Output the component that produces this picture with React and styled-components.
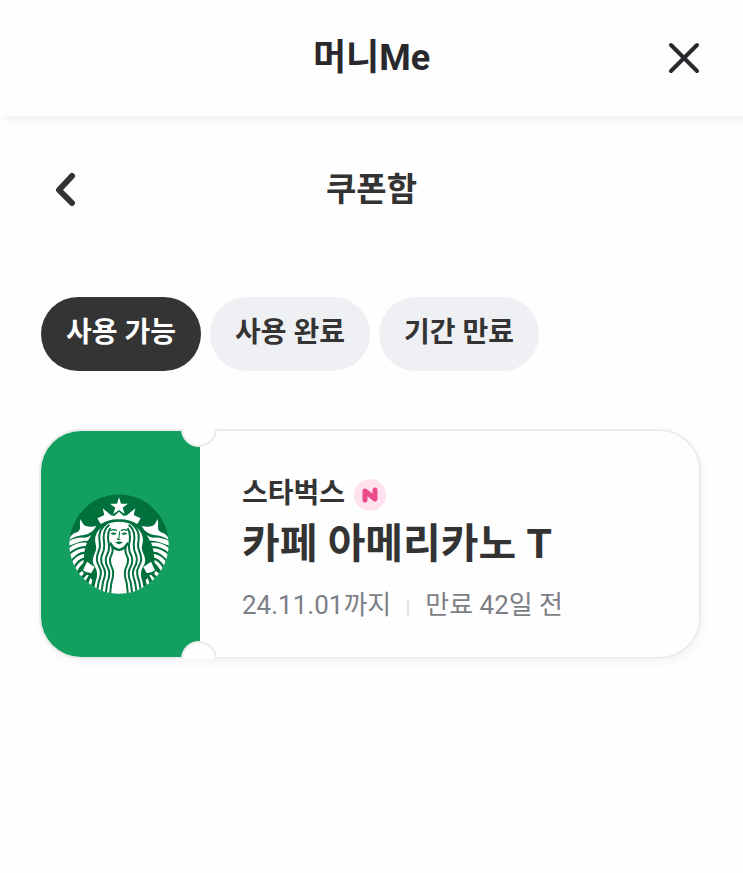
import React, { useState } from "react";
import styled, { createGlobalStyle } from "styled-components";

const GlobalStyle = createGlobalStyle`
  * { box-sizing: border-box; }
  body {
    margin: 0;
    background: #fefefe;
    color: #333333;
    font-family: Roboto, "Noto Sans CJK KR", sans-serif;
  }
  h1, h2, h3, p { margin: 0; }
  button { font: inherit; color: inherit; border: 0; padding: 0; background: none; cursor: pointer; }
`;

const TopBar = styled.header`
  display: grid;
  grid-template-columns: 48px 1fr 48px;
  align-items: center;
  height: 116px;
  padding: 0 35px;
  background: #fefefe;
  box-shadow: 6px 6px 8px rgba(0, 0, 0, 0.05);
`;

const AppTitle = styled.h1`
  grid-column: 2;
  text-align: center;
  font-size: 36px;
  line-height: 52px;
  font-weight: 700;
  color: #29292d;
`;

const IconButton = styled.button`
  display: flex;
  align-items: center;
  justify-content: center;
  width: 48px;
  height: 48px;
`;

const SubBar = styled.div`
  display: grid;
  grid-template-columns: 48px 1fr 48px;
  align-items: center;
  padding: 50px 42px 0;
`;

const PageTitle = styled.h2`
  text-align: center;
  font-size: 33px;
  line-height: 48px;
  font-weight: 700;
`;

const Tabs = styled.nav`
  display: flex;
  flex-wrap: wrap;
  gap: 9px;
  padding: 83px 41px 0;
`;

const Tab = styled.button`
  height: 74px;
  padding: 0 25px 2px;
  border-radius: 37px;
  font-size: 28px;
  line-height: 40px;
  font-weight: 700;
  background: ${(p) => (p.$active ? "#343434" : "#eff0f4")};
  color: ${(p) => (p.$active ? "#ffffff" : "#343434")};
`;

const CouponList = styled.main`
  padding: 58px 42px 40px 39px;
`;

const Coupon = styled.article`
  position: relative;
  display: flex;
  min-height: 230px;
  border: 2px solid #ececec;
  border-radius: 42px;
  background: #fefefe;
  box-shadow: 2px 4px 10px rgba(0, 0, 0, 0.04);
`;

const BrandPanel = styled.div`
  display: flex;
  align-items: center;
  justify-content: center;
  flex: 0 0 159px;
  padding-right: 4px;
  border-radius: 40px 0 0 40px;
  background: #129f60;
`;

const Notch = styled.span`
  position: absolute;
  left: 140px;
  width: 36px;
  height: 18px;
  background: #fefefe;
  border: 2px solid #ececec;
  ${(p) =>
    p.$edge === "top"
      ? "top: -2px; border-top: 0; border-radius: 0 0 18px 18px;"
      : "bottom: -2px; border-bottom: 0; border-radius: 18px 18px 0 0;"}
`;

const Details = styled.div`
  flex: 1;
  padding: 43px 24px 31px 42px;
`;

const BrandLine = styled.div`
  display: flex;
  align-items: center;
  gap: 8px;
`;

const Brand = styled.p`
  font-size: 28px;
  line-height: 40px;
  font-weight: 700;
`;

const NewBadge = styled.svg`
  width: 34px;
  height: 34px;
  margin-top: 2px;
`;

const Product = styled.h3`
  font-size: 41px;
  line-height: 60px;
  font-weight: 700;
`;

const Meta = styled.p`
  display: flex;
  align-items: center;
  gap: 16px;
  margin-top: 11px;
  font-size: 26px;
  line-height: 40px;
  color: #7c7f86;
`;

const Divider = styled.span`
  width: 2px;
  height: 16px;
  margin-top: 4px;
  background: #dfe1e6;
`;

const SirenHalf = () => (
  <g>
    <g fill="#fff">
      <path d="M62 103 Q67 119 77 124 Q91 128 109 124 Q96 148 72 151 Q48 153 27 166 Q32 148 51 143 Q62 137 60 123 Q58 112 62 103Z" />
      <path d="M26 170 Q46 157 75 159 Q87 157 94 151 L84 168 Q62 167 26 184Z" />
      <path d="M24 192 Q50 171 81 174 L77 184 Q51 183 24 207Z" />
      <path d="M25 216 Q48 190 76 191 L73 201 Q54 200 30 229Z" />
      <path d="M32 236 Q51 209 73 208 L71 219 Q56 220 40 246Z" />
      <path d="M44 252 Q58 229 71 226 L70 235 Q62 240 51 260Z" />
      <path d="M81 231 L104 247 L94 265 Q80 266 69 257Z" />
      <path d="M56 267 L66 259 L72 266 L63 277Z" />
      <path d="M68 284 L81 270 L86 272 L75 292Z" />
      <path d="M84 299 L91 280 L97 286 L92 308Z" />
      <path d="M177 111 C145 111 112 128 106 157 C103 177 112 184 107 199 C101 214 94 225 102 241 C110 254 115 268 108 286 L98 330 H178Z" />
      <path d="M177 81 L163 94 L153 92 L128 71 L133 91 L112 101 L122 118 Q149 102 178 104Z" />
    </g>
    <g fill="none" stroke="#00703d" strokeWidth="6">
      <path d="M140 116 C120 131 116 148 118 164 C121 182 121 188 114 205 C108 220 109 231 117 244 C127 260 122 275 116 292 L110 325" />
      <path d="M148 120 C133 132 130 147 131 163 C134 180 135 193 127 208 C121 221 122 233 130 247 C139 262 135 275 129 292 L123 330" />
      <path d="M151 130 C143 142 143 154 145 170 C150 188 147 201 140 213 C135 226 136 237 144 250 C151 264 149 277 142 293 L137 330" />
      <path d="M153 177 C162 195 157 207 151 219 C147 231 151 240 157 252 C163 267 159 280 154 295 L150 330" />
    </g>
    <path d="M152 138 Q160 132 171 138" fill="none" stroke="#00703d" strokeWidth="4" />
    <path d="M152 147 Q161 140 170 148 Q161 153 152 147Z" fill="#00703d" />
    <path d="M152 171 Q163 190 178 192 L178 200 Q157 198 149 179Z" fill="#00703d" />
  </g>
);

const SirenLogo = () => (
  <svg width="100" height="100" viewBox="27 28 300 300" role="img" aria-label="스타벅스">
    <defs>
      <clipPath id="seal">
        <circle cx="177" cy="178" r="149" />
      </clipPath>
    </defs>
    <g clipPath="url(#seal)">
      <circle cx="177" cy="178" r="149" fill="#00703d" />
      <SirenHalf />
      <g transform="translate(354 0) scale(-1 1)">
        <SirenHalf />
      </g>
      <path d="M177 38 L183 57 L204 57 L188 69 L194 88 L177 76 L160 88 L166 69 L150 57 L171 57Z" fill="#fff" />
      <path d="M179 140 L177 160 L171 164 L181 164" fill="none" stroke="#00703d" strokeWidth="3" />
      <path d="M165 173 Q177 168 189 173 Q177 184 165 173Z" fill="#00703d" />
    </g>
  </svg>
);

const TABS = ["사용 가능", "사용 완료", "기간 만료"];

export default function App() {
  const [active, setActive] = useState(0);
  return (
    <>
      <GlobalStyle />
      <TopBar>
        <AppTitle>머니Me</AppTitle>
        <IconButton aria-label="닫기">
          <svg width="34" height="34" viewBox="0 0 34 34" fill="none" stroke="#29292d" strokeWidth="4" strokeLinecap="round">
            <path d="M4 4 L30 30 M30 4 L4 30" />
          </svg>
        </IconButton>
      </TopBar>
      <SubBar>
        <IconButton aria-label="뒤로">
          <svg width="24" height="36" viewBox="0 0 24 36" fill="none" stroke="#333333" strokeWidth="6" strokeLinecap="round" strokeLinejoin="round">
            <path d="M18 4 L5 18 L18 31" />
          </svg>
        </IconButton>
        <PageTitle>쿠폰함</PageTitle>
      </SubBar>
      <Tabs aria-label="쿠폰 상태">
        {TABS.map((label, i) => (
          <Tab key={label} $active={i === active} aria-pressed={i === active} onClick={() => setActive(i)}>
            {label}
          </Tab>
        ))}
      </Tabs>
      <CouponList>
        <Coupon>
          <BrandPanel>
            <SirenLogo />
          </BrandPanel>
          <Notch $edge="top" />
          <Notch $edge="bottom" />
          <Details>
            <BrandLine>
              <Brand>스타벅스</Brand>
              <NewBadge viewBox="0 0 34 34" role="img" aria-label="신규">
                <circle cx="17" cy="17" r="16" fill="#ffe2ee" />
                <path d="M12 22 V13 L22 21 V12" fill="none" stroke="#ec4b8b" strokeWidth="5" strokeLinecap="round" strokeLinejoin="round" />
              </NewBadge>
            </BrandLine>
            <Product>카페 아메리카노 T</Product>
            <Meta>
              <span>24.11.01까지</span>
              <Divider />
              <span>만료 42일 전</span>
            </Meta>
          </Details>
        </Coupon>
      </CouponList>
    </>
  );
}
